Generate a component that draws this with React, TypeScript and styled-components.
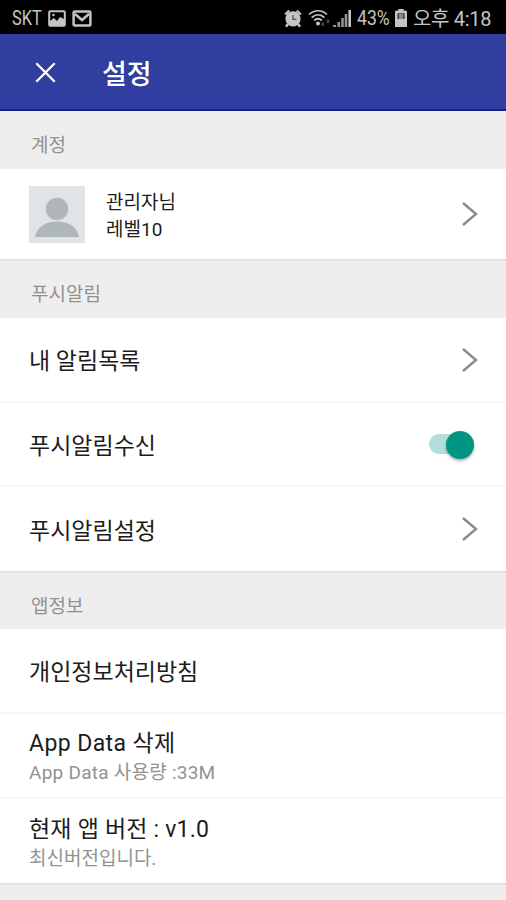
import React from "react";
import styled, { createGlobalStyle } from "styled-components";

const GlobalStyle = createGlobalStyle`
  * { box-sizing: border-box; }
  body { margin: 0; background: #eee; font-family: Roboto, "Noto Sans CJK KR", sans-serif; }
`;

const Screen = styled.div`
  width: 506px;
  height: 900px;
  overflow: hidden;
  display: flex;
  flex-direction: column;
  background: #eee;
  color: #1c1c1c;
  > * { flex-shrink: 0; }
`;

const StatusBar = styled.div`
  height: 34px;
  padding: 2px 14px 0 12px;
  display: flex;
  align-items: center;
  background: #000;
  color: #c4c4c4;
  font-size: 20px;
  line-height: 32px;
  white-space: nowrap;
  svg { display: block; flex: none; }
`;

const Carrier = styled.span`
  width: 36px;
  transform: scaleX(0.82);
  transform-origin: left;
`;

const StatusIcons = styled.div`
  display: flex;
  align-items: center;
  gap: 6px;
`;

const StatusRight = styled.div`
  margin-left: auto;
  display: flex;
  align-items: center;
`;

const Percent = styled.span`
  margin-left: 6px;
  width: 38px;
  transform: scaleX(0.88);
  transform-origin: left;
`;

const Clock = styled.span`
  margin-left: 6px;
  width: 79px;
  padding-top: 1px;
  font-size: 20px;
  letter-spacing: -0.3px;
`;

const AppBar = styled.header`
  height: 77px;
  padding: 2px 35px 0;
  display: flex;
  align-items: center;
  background: #303f9f;
  border-bottom: 2px solid #13248a;
`;

const Title = styled.h1`
  margin: 5px 0 0 46px;
  color: #fff;
  font-size: 27px;
  line-height: 40px;
  font-weight: 500;
`;

const SectionHeader = styled.h2<{ $height: number }>`
  margin: 0;
  height: ${(p) => p.$height}px;
  padding: 11px 31px 0;
  display: flex;
  align-items: center;
  background: #eee;
  color: #929292;
  font-size: 19px;
  line-height: 28px;
  font-weight: 400;
`;

const Row = styled.div<{ $height: number; $last?: boolean }>`
  height: ${(p) => p.$height}px;
  padding: 0 27px 0 29px;
  display: flex;
  align-items: center;
  justify-content: space-between;
  background: #fff;
  border-bottom: ${(p) => (p.$last ? "2px solid #e0e0e0" : "2px solid #f6f6f6")};
`;

const Profile = styled.div`
  display: flex;
  align-items: center;
  gap: 21px;
  svg { display: block; }
`;

const ProfileText = styled.div`
  padding-top: 3px;
  font-size: 19px;
  line-height: 27px;
`;

const RowText = styled.div`
  display: flex;
  flex-direction: column;
  padding-top: 5px;
`;

const Label = styled.span<{ $spacing?: number }>`
  font-size: 23px;
  line-height: 30px;
  letter-spacing: ${(p) => p.$spacing ?? 0}px;
`;

const Caption = styled.span<{ $spacing?: number }>`
  font-size: 19px;
  line-height: 28px;
  letter-spacing: ${(p) => p.$spacing ?? 0}px;
  color: #929292;
`;

const Track = styled.div`
  width: 45px;
  height: 20px;
  margin-right: 5px;
  display: flex;
  align-items: center;
  justify-content: flex-end;
  border-radius: 10px;
  background: #b2dfd8;
`;

const Thumb = styled.div`
  width: 28px;
  height: 28px;
  margin-top: 1px;
  flex: none;
  border-radius: 50%;
  background: #009682;
  box-shadow: 0 2px 3px rgba(0, 0, 0, 0.3);
`;

const Chevron = () => (
  <svg width="18" height="26" viewBox="0 0 18 26" fill="none" stroke="#8a8a8a" strokeWidth="2.4">
    <path d="M2 2 15 13 2 24" />
  </svg>
);

const CloseIcon = () => (
  <svg width="21" height="21" viewBox="0 0 21 21" stroke="#fff" strokeWidth="2.3">
    <path d="m1.3 1.3 18.4 18.4M19.7 1.3 1.3 19.7" />
  </svg>
);

const Avatar = () => (
  <svg width="56" height="57" viewBox="0 0 56 57">
    <path fill="#e0e4e6" d="M0 0h56v57H0z" />
    <circle cx="28" cy="23" r="11.2" fill="#b0b7ba" />
    <path fill="#b0b7ba" d="M6 51C8 41 16 35.5 28 35.5S48 41 50 51z" />
  </svg>
);

const PictureIcon = () => (
  <svg width="18" height="17" viewBox="0 0 18 17">
    <rect x="1.2" y="1.2" width="15.6" height="14.6" rx="1" fill="none" stroke="#c4c4c4" strokeWidth="2" />
    <path fill="#c4c4c4" d="M2 15v-4l4-3 3 3 3-4 4 2v6z" />
    <circle cx="5.4" cy="5" r="1.2" fill="#c4c4c4" />
  </svg>
);

const MailIcon = () => (
  <svg width="20" height="17" viewBox="0 0 20 17" fill="none" stroke="#c4c4c4" strokeWidth="2.5">
    <rect x="1.6" y="1.6" width="16.8" height="13.8" rx="1" />
    <path d="m3 4 7 6 7-6" />
  </svg>
);

const AlarmIcon = () => (
  <svg width="18" height="19" viewBox="0 0 18 19" fill="none">
    <path d="m1.2 5.5 4-4M16.8 5.5l-4-4M4 15l-2 2.7M14 15l2 2.7" stroke="#c4c4c4" strokeWidth="2.4" />
    <circle cx="9" cy="9.8" r="7.6" fill="#c4c4c4" />
    <path d="M9 6v4.3h3.5" stroke="#555" strokeWidth="1.3" />
  </svg>
);

const WifiIcon = () => (
  <svg width="25" height="18" viewBox="0 0 25 18" fill="none" stroke="#c4c4c4" strokeWidth="1.7">
    <path d="M1 5.5c5.3-5 13-5 18 0M3.6 8.6c3.9-3.6 9-3.6 12.8 0M6.2 11.5c2.4-2.2 5.2-2.2 7.6 0" />
    <circle cx="10" cy="14.6" r="2" fill="#c4c4c4" stroke="none" />
    <path d="M14.7 13.5v3.6M20 10.5v3.6" stroke="#484848" strokeWidth="2.6" />
  </svg>
);

const SignalIcon = () => (
  <svg width="18" height="18" viewBox="0 0 18 18" fill="#c4c4c4">
    <path d="M0 16h3v2H0zM4.5 13h2.6v5H4.5zM8.2 9h2.6v9H8.2zM11.7 5h2.6v13h-2.6z" opacity=".75" />
    <path d="M15.4 1H18v17h-2.6z" />
  </svg>
);

const BatteryIcon = () => (
  <svg width="12" height="18" viewBox="0 0 12 18">
    <path fill="#c4c4c4" d="M3.5 0h5v1.5H11l1 1V18H0V2.5l1-1h2.5z" />
    <path fill="#444" d="M2.4 4.2h7.2V10H2.4z" />
    <path fill="#888" d="M4 5h4v5H4z" />
  </svg>
);

export default function App() {
  return (
    <Screen>
      <GlobalStyle />
      <StatusBar>
        <Carrier>SKT</Carrier>
        <StatusIcons>
          <PictureIcon />
          <MailIcon />
        </StatusIcons>
        <StatusRight>
          <StatusIcons>
            <AlarmIcon />
            <WifiIcon />
          </StatusIcons>
          <SignalIcon />
          <Percent>43%</Percent>
          <BatteryIcon />
          <Clock>오후 4:18</Clock>
        </StatusRight>
      </StatusBar>
      <AppBar>
        <CloseIcon />
        <Title>설정</Title>
      </AppBar>

      <SectionHeader $height={58}>계정</SectionHeader>
      <Row $height={92} $last>
        <Profile>
          <Avatar />
          <ProfileText>
            <div>관리자님</div>
            <div>레벨10</div>
          </ProfileText>
        </Profile>
        <Chevron />
      </Row>

      <SectionHeader $height={57}>푸시알림</SectionHeader>
      <Row $height={85}>
        <RowText><Label>내 알림목록</Label></RowText>
        <Chevron />
      </Row>
      <Row $height={84}>
        <RowText><Label>푸시알림수신</Label></RowText>
        <Track><Thumb /></Track>
      </Row>
      <Row $height={86} $last>
        <RowText><Label>푸시알림설정</Label></RowText>
        <Chevron />
      </Row>

      <SectionHeader $height={56}>앱정보</SectionHeader>
      <Row $height={85}>
        <RowText><Label>개인정보처리방침</Label></RowText>
      </Row>
      <Row $height={85}>
        <RowText>
          <Label $spacing={0.4}>App Data 삭제</Label>
          <Caption $spacing={0.25}>App Data 사용량 :33M</Caption>
        </RowText>
      </Row>
      <Row $height={86} $last>
        <RowText>
          <Label $spacing={0.2}>현재 앱 버전 : v1.0</Label>
          <Caption>최신버전입니다.</Caption>
        </RowText>
      </Row>
    </Screen>
  );
}
